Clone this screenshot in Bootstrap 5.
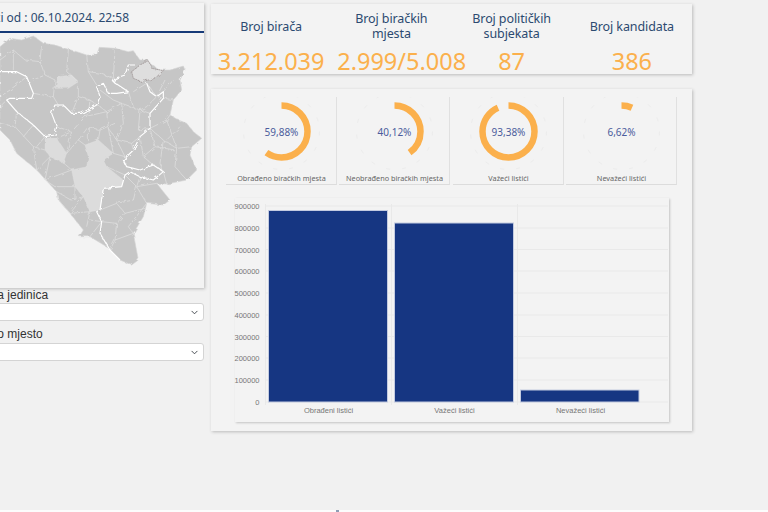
<!DOCTYPE html>
<html lang="en">
<head>
  <meta charset="UTF-8" />
  <meta name="viewport" content="width=device-width, initial-scale=1.0" />
  <title>Izbori</title>
  <link href="https://cdn.jsdelivr.net/npm/bootstrap@5.3.3/dist/css/bootstrap.min.css" rel="stylesheet" />
  <style>
    html, body { height: 100%; overflow: hidden; }
    body { background: #f1f1f1; font-family: "Noto Sans", "Open Sans", sans-serif; }
    .page-wrap { height: 503px; padding-top: 3px; margin-left: -70px; }
    .page-foot { height: 9px; background: #fcfcfc; }
    .foot-mark { width: 3px; height: 2px; margin: 7px 0 0 336px; background: #8f9db5; }
    .left-col { width: 274px; }
    .panel-box { background: #f3f3f3; box-shadow: 1px 1px 3px #bbb; }
    .map-panel { height: 285px; }
    .map-head { height: 30px; border-bottom: 2px solid #163a78; padding: 6px 0 0 36px; font-size: 12px; color: #2c4a70; white-space: nowrap; }
    .map-svg { display: block; margin: 0 -1px 0 auto; }
    .field-label { font-family: "Liberation Sans", sans-serif; font-size: 12px; line-height: 15px; color: #333; margin-left: 34px; }
    .field-label-next { margin-top: 6px; margin-bottom: 1px; }
    .field-select { height: 18px; min-height: 18px; padding: 0 24px 0 4px; border-radius: 3px; border-color: #d4d4d4; background-position: right 4px center; background-size: 9px 7px; font-size: 11px; }
    .right-col { width: 481px; margin-left: 7px; }
    .stat-panel { height: 70px; margin-top: 1px; color: #2c4a70; }
    .stat-title { height: 44px; font-size: 12.5px; letter-spacing: -0.1px; line-height: 15px; }
    .stat-num { font-size: 23.5px; line-height: 26px; color: #fbb04c; white-space: nowrap; }
    .stat-wide { padding-left: 6px; }
    .chart-panel { height: 342px; margin-top: 15px; padding: 8px 0 0 15px; }
    .gauge-row { width: 451px; }
    .gauge-box { width: 111px; height: 88px; border-right: 1px solid #e0e0e0; border-bottom: 1px solid #dcdcdc; }
    .gauge-svg { display: block; }
    .gauge-pct { font-size: 10px; fill: #4b5c9c; }
    .gauge-cap { font-size: 7.3px; fill: #666; }
    .bar-box { width: 434px; height: 224px; margin: 13px 0 0 9px; box-shadow: 1px 1px 2px #c4c4c4; }
    .bar-svg { display: block; overflow: visible; font-family: "Liberation Sans", sans-serif; font-size: 7.5px; fill: #777; }
  </style>
</head>
<body>

  <div class="page-wrap d-flex align-items-start">
    <div class="left-col flex-shrink-0">
      <div class="panel-box map-panel">
        <div class="map-head">Podaci od : 06.10.2024. 22:58</div>
        <svg class="map-svg" width="205" height="253" viewBox="0 99 615 759">
          <defs>
            <filter id="rough" x="-5%" y="-5%" width="110%" height="110%">
              <feTurbulence type="fractalNoise" baseFrequency="0.07" numOctaves="2" seed="4" />
              <feDisplacementMap in="SourceGraphic" scale="11" />
            </filter>
          </defs>
          <g filter="url(#rough)">
            <!-- outline -->
            <path fill="#c6c6c6" stroke="#d6d6d6" stroke-width="2" d="M0 140L30 115L65 120L100 108L130 130L165 135L195 145L230 155L260 165L290 165L298 142L345 145L385 155L400 152L420 180L445 180L452 192L480 210L510 210L550 198L555 210L540 240L545 270L520 300L510 345L535 360L560 370L580 395L605 415L575 440L570 465L590 510L560 540L500 552L470 550L490 575L510 600L490 615L440 610L430 650L400 700L415 780L395 795L360 780L320 740L270 710L238 710L250 690L210 640L175 600L170 575L110 510L50 460L30 420L0 390Z" />
            <!-- lighter regions -->
            <g fill="#dcdcdc" stroke="#e4e4e4">
              <path d="M175 230L215 225L235 245L205 265L165 265Z" />
              <path d="M135 415L170 415L200 460L190 488L150 470L135 450Z" />
              <path d="M255 435L295 420L340 460L310 480L320 500L370 540L365 560L310 565L300 630L270 635L250 590L225 560L215 510L260 500L265 470Z" />
            </g>
            <!-- municipality borders -->
            <g fill="none" stroke="#e2e2e2" stroke-width="2">
              <path d="M40 150L75 180L120 185L135 225L165 240L160 290L175 315" />
              <path d="M125 130L120 185M205 150L200 215L235 245L235 290L270 300L300 320" />
              <path d="M260 165L265 215L290 255M345 150L340 235" />
              <path d="M0 290L30 270L80 230M50 335L45 380L100 440L135 450" />
              <path d="M170 380L215 395L255 350L320 335L365 310L420 330L450 340" />
              <path d="M320 335L325 385L350 420L395 430L400 450M365 310L370 370L350 420" />
              <path d="M420 330L415 390L450 385L500 360L510 345" />
              <path d="M470 290L520 300M450 385L490 420L530 445L575 440M490 420L480 490L490 515" />
              <path d="M420 410L430 470L460 495M530 445L525 500L560 540" />
              <path d="M200 460L235 420L255 435M170 415L215 395M190 488L215 510M110 510L150 470" />
              <path d="M165 560L225 560M170 575L215 600L250 590M210 640L270 635M175 600L210 640" />
              <path d="M300 630L350 610L375 640L435 625M375 525L410 560L440 610M410 560L470 550" />
              <path d="M305 665L350 670L375 640M350 670L345 720L400 700M270 710L305 665" />
              <path d="M340 460L375 470L370 480M320 500L375 525M265 380L265 430" />
              <path d="M0 180L40 150L40 210M135 225L100 240M160 290L100 280M45 380L0 370M20 300L0 320" />
              <path d="M235 290L215 340M270 300L265 340M300 320L320 335M300 270L340 300L365 310M340 235L300 220L265 215" />
              <path d="M385 275L400 320M400 275L440 250L470 290L440 320L420 330M495 240L470 290M520 240L490 275" />
              <path d="M345 370L300 390L265 380M300 390L295 420M325 385L340 460M350 420L375 470M395 430L420 410" />
              <path d="M450 385L465 440L430 470M465 440L525 450M500 360L530 445M540 380L500 420" />
              <path d="M100 375L70 410M135 410L110 440M100 440L110 510M215 395L200 460M235 420L265 380M150 470L135 540" />
              <path d="M135 540L215 510M165 560L135 540M225 560L225 600M250 590L210 640M270 635L260 680M305 665L270 660" />
              <path d="M410 560L400 600L350 610M440 610L385 680L400 700M345 720L330 750M490 515L500 552M420 530L410 560" />
            </g>
            <!-- entity line -->
            <path fill="none" stroke="#fff" stroke-width="3.500" stroke-linejoin="round" d="M0 215L50 215L80 230L100 280L95 295L30 295L20 300L50 335L100 375L135 410L165 405L170 380L155 340L165 315L190 315L215 340L245 340L290 315L300 290L290 260L310 250L325 280L350 280L385 275L340 245L345 235L375 225L385 195L405 195" />
            <path fill="none" stroke="#fff" stroke-width="3.500" stroke-linejoin="round" d="M440 250L450 275L470 290L490 275L490 295L450 340L450 385L420 410L400 450L370 480L380 500L420 510L460 495L490 515L460 540L420 530L390 515L375 525L365 560L310 565L300 630L290 635L305 665L300 700L330 750L360 780" />
            <!-- Brcko -->
            <path fill="#dedede" stroke="#8d7f7f" stroke-width="2" stroke-dasharray="4 2" d="M395 215L420 195L445 182L455 205L490 212L465 235L425 245L400 235Z" />
          </g>
        </svg>
      </div>
      <div class="field-label">Izborna jedinica</div>
      <select class="form-select field-select"></select>
      <div class="field-label field-label-next">Biračko mjesto</div>
      <select class="form-select field-select"></select>
    </div>

    <div class="right-col flex-shrink-0">
      <div class="panel-box stat-panel row g-0 text-center">
        <div class="col-3"><div class="stat-title d-flex align-items-center justify-content-center">Broj birača</div><div class="stat-num">3.212.039</div></div>
        <div class="col-3"><div class="stat-title d-flex align-items-center justify-content-center">Broj biračkih<br />mjesta</div><div class="stat-num stat-wide">2.999/5.008</div></div>
        <div class="col-3"><div class="stat-title d-flex align-items-center justify-content-center">Broj političkih<br />subjekata</div><div class="stat-num">87</div></div>
        <div class="col-3"><div class="stat-title d-flex align-items-center justify-content-center">Broj kandidata</div><div class="stat-num">386</div></div>
      </div>

      <div class="panel-box chart-panel">
        <div id="gauges" class="d-flex justify-content-between gauge-row"></div>
        <div class="bar-box">
          <svg class="bar-svg" width="434" height="224" viewBox="235 198 434 224">
            <g stroke="#e9e9e9">
              <path d="M265 206H668M265 228H668M265 249.500H668M265 271H668M265 293H668M265 315H668M265 336.500H668M265 358H668M265 380H668M265 402H668" />
              <path d="M265.500 204V405M391.500 204V405M517.500 204V405" />
            </g>
            <g fill="#163682" stroke="#c3cbe0">
              <rect x="268.500" y="210.500" width="119" height="191.500" />
              <rect x="394.500" y="223" width="119" height="179" />
              <rect x="520.500" y="390" width="118.500" height="12" />
            </g>
            <g text-anchor="end">
              <text x="259.500" y="209">900000</text>
              <text x="259.500" y="231">800000</text>
              <text x="259.500" y="252.500">700000</text>
              <text x="259.500" y="274">600000</text>
              <text x="259.500" y="296">500000</text>
              <text x="259.500" y="318">400000</text>
              <text x="259.500" y="339.500">300000</text>
              <text x="259.500" y="361">200000</text>
              <text x="259.500" y="383">100000</text>
              <text x="259.500" y="404.500">0</text>
            </g>
            <g text-anchor="middle">
              <text x="328.500" y="413">Obrađeni listići</text>
              <text x="454.500" y="413">Važeći listići</text>
              <text x="580.500" y="413">Nevažeći listići</text>
            </g>
          </svg>
        </div>
      </div>
    </div>
  </div>

  <div class="page-foot"><div class="foot-mark"></div></div>

  <script>
    const gauges = [
      { pct: 59.88, label: '59,88%', cap: 'Obrađeno biračkih mjesta' },
      { pct: 40.12, label: '40,12%', cap: 'Neobrađeno biračkih mjesta' },
      { pct: 93.38, label: '93,38%', cap: 'Važeći listići' },
      { pct: 6.62, label: '6,62%', cap: 'Nevažeći listići' }
    ];

    const gaugeRow = document.getElementById('gauges');
    gauges.forEach(g => {
      const box = document.createElement('div');
      box.className = 'gauge-box';
      box.innerHTML = `
        <svg class="gauge-svg" width="111" height="88" viewBox="0 0 111 88">
          <circle cx="55.5" cy="34.500" r="38" fill="none" stroke="#ececec" stroke-width="1" stroke-dasharray="4 12" />
          <circle cx="55.5" cy="34.500" r="26" fill="none" stroke="#fbb04c" stroke-width="6.500" pathLength="100"
            stroke-dasharray="${g.pct} 100" transform="rotate(-90 55.5 34.500)" />
          <text class="gauge-pct" x="55.5" y="38.500" text-anchor="middle">${g.label}</text>
          <text class="gauge-cap" x="55.5" y="83.500" text-anchor="middle">${g.cap}</text>
        </svg>`;
      gaugeRow.appendChild(box);
    });
  </script>

</body>
</html>
